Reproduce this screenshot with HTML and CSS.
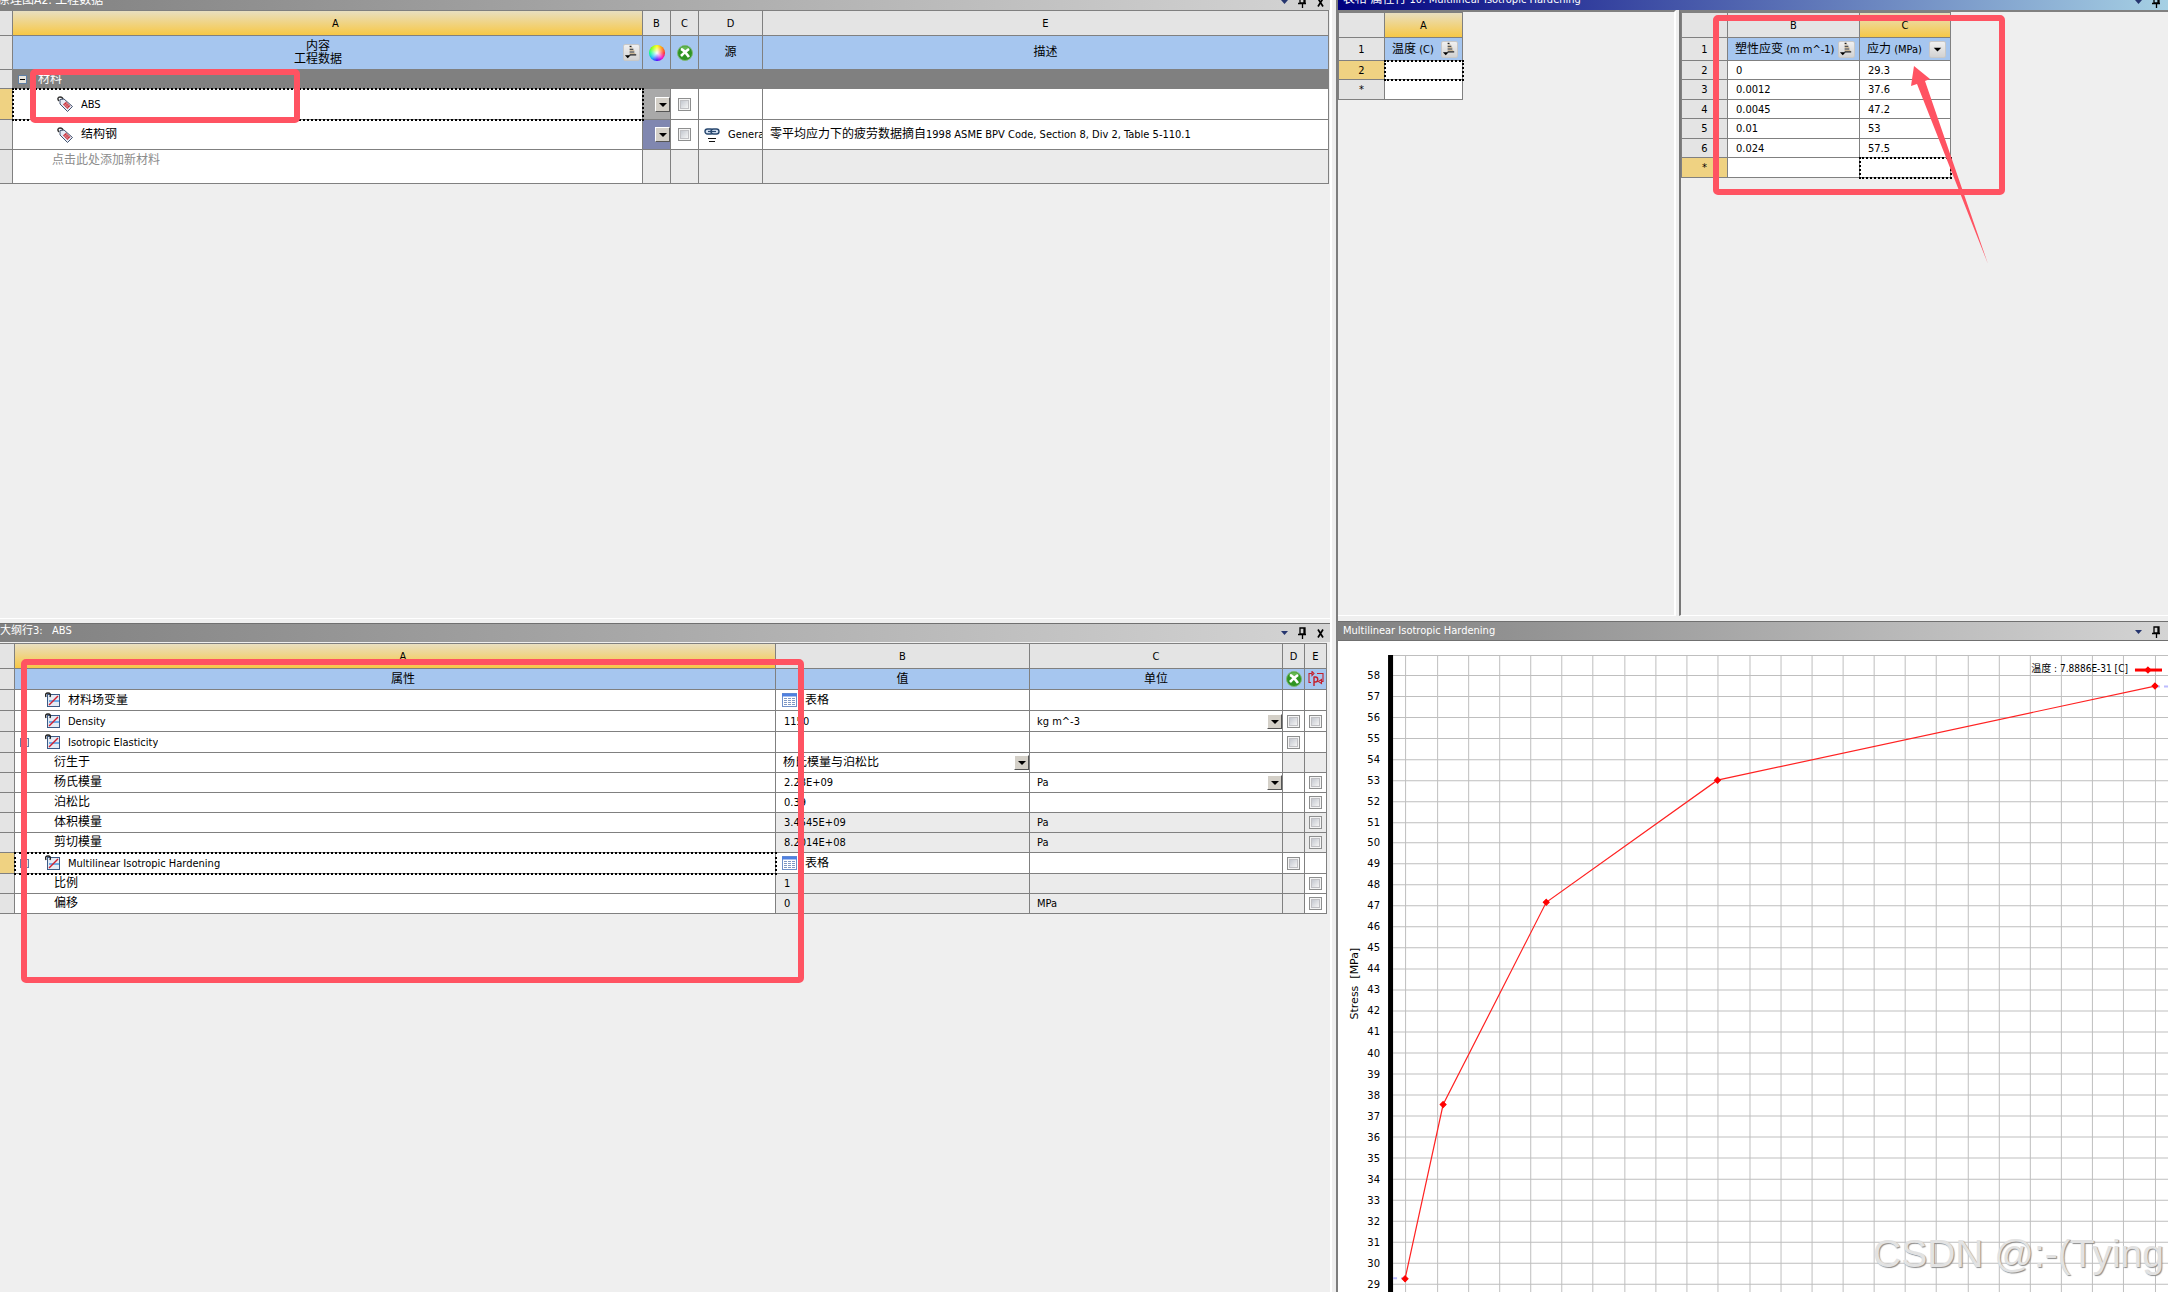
FILE: index.html
```html
<!DOCTYPE html>
<html lang="zh-CN">
<head>
<meta charset="utf-8">
<title>工程数据</title>
<link rel="stylesheet" href="styles.css">
</head>
<body>
<svg class="defs" width="0" height="0" aria-hidden="true">
  <symbol id="i-tag" viewBox="0 0 16 16">
    <path d="M2 5C0 3 1 1 3 1s3 1 3 3" fill="none" stroke="#333" stroke-width="1.4"/>
    <path d="M3 3.500l4-.5 8.500 7.500-5 5L3 8z" fill="#e6ecf6" stroke="#43536f"/>
    <path d="M6 8.500l3-3 4.500 4.500-3 3z" fill="#c8323c"/>
    <path d="M7 7.500l4.500 4.500M8.500 6l4.500 4.500M7.500 10l3-3M9 11.500l3-3" stroke="#eab4b8" stroke-width=".6"/>
  </symbol>
  <symbol id="i-prop" viewBox="0 0 16 16">
    <rect x="2.500" y="2.500" width="12" height="12" fill="#e4ebf5" stroke="#3c5a86"/>
    <path d="M1 5C0 2 1 1 3 1s3 1 2 4" fill="none" stroke="#222" stroke-width="1.4"/>
    <path d="M4 9h10" stroke="#2f8ae0" stroke-width="1.300"/>
    <path d="M4 13l9-9" stroke="#d02030" stroke-width="1.400"/>
  </symbol>
  <symbol id="i-x" viewBox="0 0 16 16">
    <circle cx="8" cy="8" r="7.500" fill="#2f9422" stroke="#7fb777"/>
    <path d="M3 4a6 6 0 0 1 10 0l-3 2H5z" fill="#7cc866" opacity=".7"/>
    <path d="M4 4c3 1 5 4 8 8M12 4c-3 2-5 4-8 7" stroke="#fff" stroke-width="2.600" fill="none"/>
  </symbol>
  <symbol id="i-param" viewBox="0 0 16 16">
    <path d="M4 2.500H1v9h2M4 .5v4l2-2zM9 2.500h6v8h-2M13.500 8.500l-3 2 3 2z" fill="none" stroke="#c4202c" stroke-width="1.100"/>
    <path d="M6 15V5.500M6 6h1.500c3 0 3 5 0 5H6" fill="none" stroke="#c4202c" stroke-width="1.400"/>
  </symbol>
  <symbol id="i-table" viewBox="0 0 16 16">
    <rect x=".5" y="1.500" width="14" height="13" fill="#fff" stroke="#7090c8"/>
    <path d="M0 3h15" stroke="#4f80e0" stroke-width="3"/>
    <path d="M2 6.500h11M2 8.500h11M2 10.500h11M2 12.500h11" stroke="#7f98c4" stroke-dasharray="3 1"/>
  </symbol>
  <symbol id="i-link" viewBox="0 0 16 16">
    <rect x="1" y="2" width="8" height="5" rx="2.500" fill="#d5e2f3" stroke="#28486f" stroke-width="1.400"/>
    <rect x="7" y="2" width="8" height="5" rx="2.500" fill="#d5e2f3" stroke="#28486f" stroke-width="1.400"/>
    <path d="M4 4.500h8" stroke="#28486f" stroke-width="1.200"/>
    <path d="M4 11.500h8M5 14.500h6" stroke="#111"/>
  </symbol>
  <symbol id="i-sort" viewBox="0 0 16 16">
    <path d="M6 1.500h2M6 4.500h4M6 7.500h5M6 10.500h7" stroke="#222" stroke-width="1.200"/>
    <path d="M6 9h6M6 6h5M6 3h3" stroke="#c9b08a"/>
    <path d="M1 11h6l-3 3z" fill="#000"/>
  </symbol>
  <symbol id="i-down" viewBox="0 0 16 16"><path d="M4 6h8l-4 4z" fill="#000"/></symbol>
  <symbol id="i-menu" viewBox="0 0 16 16"><path d="M5 6h7L8.500 10z" fill="#26356f"/></symbol>
  <symbol id="i-pin" viewBox="0 0 16 16"><path d="M6 3h5v6H6zM10 3v6M4 9.500h8M8.500 9v5" fill="none" stroke="#000" stroke-width="1.300"/></symbol>
  <symbol id="i-close" viewBox="0 0 16 16"><path d="M6 4.500l5 8M11 4.500l-5 8" stroke="#000" stroke-width="1.700"/></symbol>
</svg>

<main class="workspace">
  <div class="side left">
    <section class="pane">
      <header class="bar cut">
        <h2>原理图A2: 工程数据</h2>
        <div class="tools">
          <button aria-label="菜单"><svg><use href="#i-menu"/></svg></button>
          <button aria-label="固定"><svg><use href="#i-pin"/></svg></button>
          <button aria-label="关闭"><svg><use href="#i-close"/></svg></button>
        </div>
      </header>
      <table class="grid outline">
        <colgroup><col class="w-edge"><col class="w-name"><col class="w-flag"><col class="w-flag"><col class="w-src"><col></colgroup>
        <tr class="h25 letters"><th></th><th class="gold wide">A</th><th>B</th><th>C</th><th>D</th><th>E</th></tr>
        <tr class="h34 heads"><th class="edge"></th>
          <th><div class="headcell"><span>内容<br>工程数据</span><button class="filter" aria-label="排序"><svg><use href="#i-sort"/></svg></button></div></th>
          <th><i class="wheel"></i></th><th><svg class="ico"><use href="#i-x"/></svg></th><th>源</th><th>描述</th></tr>
        <tr class="h19 group"><th class="edge"></th><td colspan="5"><div class="line"><button class="fold" aria-label="折叠"></button><span>材料</span></div></td></tr>
        <tr class="h31"><th class="edge on"></th>
          <td class="picked"><div class="line item"><svg class="ico"><use href="#i-tag"/></svg><span>ABS</span></div></td>
          <td class="swatch grey"><div class="drop"><select aria-label="ABS 颜色"><option></option></select><i></i></div></td>
          <td class="mid"><input type="checkbox" aria-label="抑制 ABS"></td><td></td><td></td></tr>
        <tr class="h30"><th class="edge"></th>
          <td><div class="line item"><svg class="ico"><use href="#i-tag"/></svg><span class="zh">结构钢</span></div></td>
          <td class="swatch violet"><div class="drop"><select aria-label="结构钢 颜色"><option></option></select><i></i></div></td>
          <td class="mid"><input type="checkbox" aria-label="抑制 结构钢"></td>
          <td><div class="line src"><svg class="ico"><use href="#i-link"/></svg><span>Genera</span></div></td>
          <td class="note"><span class="zh">零平均应力下的疲劳数据摘自</span>1998 ASME BPV Code, Section 8, Div 2, Table 5-110.1</td></tr>
        <tr class="h34"><th class="edge"></th><td class="hint">点击此处添加新材料</td><td class="ro"></td><td class="ro"></td><td class="ro"></td><td class="ro"></td></tr>
      </table>
      <div class="callout c-abs"></div>
    </section>

    <section class="pane lower">
      <header class="bar full">
        <h2>大纲行3:&nbsp; &nbsp;ABS</h2>
        <div class="tools">
          <button aria-label="菜单"><svg><use href="#i-menu"/></svg></button>
          <button aria-label="固定"><svg><use href="#i-pin"/></svg></button>
          <button aria-label="关闭"><svg><use href="#i-close"/></svg></button>
        </div>
      </header>
      <table class="grid props">
        <colgroup><col class="w-edge2"><col><col class="w-val"><col class="w-unit"><col class="w-tick"><col class="w-tick"></colgroup>
        <tr class="h25 letters"><th></th><th class="gold wide">A</th><th>B</th><th>C</th><th>D</th><th>E</th></tr>
        <tr class="h21 heads"><th class="edge"></th><th class="wide">属性</th><th>值</th><th>单位</th><th><svg class="ico"><use href="#i-x"/></svg></th><th><svg class="ico"><use href="#i-param"/></svg></th></tr>
        <tr class="h21"><th class="edge"></th><td><div class="line prop"><svg class="ico"><use href="#i-prop"/></svg><span class="zh">材料场变量</span></div></td><td><div class="line tab"><svg class="ico"><use href="#i-table"/></svg><span class="zh">表格</span></div></td><td></td><td></td><td></td></tr>
        <tr class="h21"><th class="edge"></th><td><div class="line prop"><svg class="ico"><use href="#i-prop"/></svg><span>Density</span></div></td><td class="val">1150</td><td><div class="drop"><select aria-label="密度单位"><option>kg m^-3</option></select><i></i></div></td><td class="mid"><input type="checkbox" aria-label="抑制 Density"></td><td class="mid"><input type="checkbox" aria-label="参数化 Density"></td></tr>
        <tr class="h21"><th class="edge"></th><td><div class="line prop fold-row"><button class="fold" aria-label="折叠"></button><svg class="ico"><use href="#i-prop"/></svg><span>Isotropic Elasticity</span></div></td><td></td><td></td><td class="mid"><input type="checkbox" aria-label="抑制 Isotropic Elasticity"></td><td></td></tr>
        <tr class="h20"><th class="edge"></th><td class="sub">衍生于</td><td><div class="drop zh"><select aria-label="衍生于"><option>杨氏模量与泊松比</option></select><i></i></div></td><td></td><td class="ro"></td><td class="ro"></td></tr>
        <tr class="h20"><th class="edge"></th><td class="sub">杨氏模量</td><td class="val">2.28E+09</td><td><div class="drop"><select aria-label="杨氏模量单位"><option>Pa</option></select><i></i></div></td><td></td><td class="mid"><input type="checkbox" aria-label="参数化 杨氏模量"></td></tr>
        <tr class="h20"><th class="edge"></th><td class="sub">泊松比</td><td class="val">0.39</td><td></td><td></td><td class="mid"><input type="checkbox" aria-label="参数化 泊松比"></td></tr>
        <tr class="h20"><th class="edge"></th><td class="sub">体积模量</td><td class="val ro">3.4545E+09</td><td class="unit ro">Pa</td><td class="ro"></td><td class="mid ro"><input type="checkbox" aria-label="参数化 体积模量"></td></tr>
        <tr class="h20"><th class="edge"></th><td class="sub">剪切模量</td><td class="val ro">8.2014E+08</td><td class="unit ro">Pa</td><td class="ro"></td><td class="mid ro"><input type="checkbox" aria-label="参数化 剪切模量"></td></tr>
        <tr class="h21"><th class="edge on"></th><td class="picked"><div class="line prop fold-row"><button class="fold" aria-label="折叠"></button><svg class="ico"><use href="#i-prop"/></svg><span>Multilinear Isotropic Hardening</span></div></td><td><div class="line tab"><svg class="ico"><use href="#i-table"/></svg><span class="zh">表格</span></div></td><td></td><td class="mid"><input type="checkbox" aria-label="抑制 Multilinear Isotropic Hardening"></td><td></td></tr>
        <tr class="h20"><th class="edge"></th><td class="sub">比例</td><td class="val ro">1</td><td class="ro"></td><td class="ro"></td><td class="mid"><input type="checkbox" aria-label="参数化 比例"></td></tr>
        <tr class="h20"><th class="edge"></th><td class="sub">偏移</td><td class="val ro">0</td><td class="unit ro">MPa</td><td class="ro"></td><td class="mid"><input type="checkbox" aria-label="参数化 偏移"></td></tr>
      </table>
      <div class="callout c-props"></div>
    </section>
  </div>

  <div class="side right">
    <section class="pane">
      <header class="bar cut active">
        <h2><span class="zh">表格 属性行</span> 10: Multilinear Isotropic Hardening</h2>
        <div class="tools">
          <button aria-label="菜单"><svg><use href="#i-menu"/></svg></button>
          <button aria-label="固定"><svg><use href="#i-pin"/></svg></button>
        </div>
      </header>
      <div class="split">
        <div class="well first">
          <table class="grid data t1">
            <colgroup><col class="w-num"><col></colgroup>
            <tr class="h25 letters"><th></th><th class="gold">A</th></tr>
            <tr class="h23 heads"><th class="edge">1</th><th><div class="colhead"><span><span class="zh">温度</span> (C)</span><button class="filter" aria-label="排序"><svg><use href="#i-sort"/></svg></button></div></th></tr>
            <tr class="h19"><th class="edge on">2</th><td class="picked"></td></tr>
            <tr class="h20"><th class="edge">*</th><td></td></tr>
          </table>
        </div>
        <div class="well">
          <table class="grid data t2">
            <colgroup><col class="w-num"><col class="w-strain"><col></colgroup>
            <tr class="h25 letters"><th></th><th>B</th><th class="gold">C</th></tr>
            <tr class="h23 heads"><th class="edge">1</th><th><div class="colhead"><span><span class="zh">塑性应变</span> (m m^-1)</span><button class="filter" aria-label="排序"><svg><use href="#i-sort"/></svg></button></div></th><th><div class="colhead"><span><span class="zh">应力</span> (MPa)</span><button class="filter" aria-label="筛选"><svg><use href="#i-down"/></svg></button></div></th></tr>
            <tr class="h19"><th class="edge">2</th><td>0</td><td>29.3</td></tr>
            <tr class="h20"><th class="edge">3</th><td>0.0012</td><td>37.6</td></tr>
            <tr class="h19"><th class="edge">4</th><td>0.0045</td><td>47.2</td></tr>
            <tr class="h20"><th class="edge">5</th><td>0.01</td><td>53</td></tr>
            <tr class="h19"><th class="edge">6</th><td>0.024</td><td>57.5</td></tr>
            <tr class="h20"><th class="edge on">*</th><td></td><td class="picked"></td></tr>
          </table>
          <div class="callout c-data"></div>
          <svg class="arrow" viewBox="0 0 80 200" aria-hidden="true"><path d="M4 1L20 14L15 16L78 199L7 19L1 21z" fill="#ff5362"/></svg>
        </div>
      </div>
    </section>

    <section class="pane chart">
      <header class="bar full two">
        <h2><span class="zh">属性图表行</span><br>Multilinear Isotropic Hardening</h2>
        <div class="tools">
          <button aria-label="菜单"><svg><use href="#i-menu"/></svg></button>
          <button aria-label="固定"><svg><use href="#i-pin"/></svg></button>
        </div>
      </header>
      <div class="plot">
        <svg viewBox="0 0 829 651" preserveAspectRatio="xMinYMin slice" role="img" aria-label="Multilinear Isotropic Hardening">
          <g transform="translate(-1 0)">
          <path class="rule" d="M56 14.500H840M56 34.500H840M56 55.500H840M56 76.500H840M56 97.500H840M56 118.500H840M56 139.500H840M56 160.500H840M56 181.500H840M56 201.500H840M56 222.500H840M56 243.500H840M56 264.500H840M56 285.500H840M56 306.500H840M56 327.500H840M56 348.500H840M56 369.500H840M56 390.500H840M56 411.500H840M56 432.500H840M56 453.500H840M56 474.500H840M56 495.500H840M56 516.500H840M56 537.500H840M56 558.500H840M56 579.500H840M56 600.500H840M56 621.500H840M56 642.500H840"/>
          <path class="rule" d="M68.500 14V651M100.500 14V651M131.500 14V651M162.500 14V651M193.500 14V651M224.500 14V651M255.500 14V651M287.500 14V651M318.500 14V651M349.500 14V651M380.500 14V651M412.500 14V651M443.500 14V651M474.500 14V651M505.500 14V651M536.500 14V651M567.500 14V651M598.500 14V651M630.500 14V651M661.500 14V651M692.500 14V651M723.500 14V651M754.500 14V651M785.500 14V651M817.500 14V651"/>
          <rect x="51" y="14" width="5" height="637"/>
          <g class="ticks">
            <text x="43" y="38">58</text><text x="43" y="59">57</text><text x="43" y="80">56</text><text x="43" y="101">55</text><text x="43" y="122">54</text><text x="43" y="143">53</text><text x="43" y="164">52</text><text x="43" y="185">51</text><text x="43" y="205">50</text><text x="43" y="226">49</text><text x="43" y="247">48</text><text x="43" y="268">47</text><text x="43" y="289">46</text><text x="43" y="310">45</text><text x="43" y="331">44</text><text x="43" y="352">43</text><text x="43" y="373">42</text><text x="43" y="394">41</text><text x="43" y="415">40</text><text x="43" y="436">39</text><text x="43" y="457">38</text><text x="43" y="478">37</text><text x="43" y="499">36</text><text x="43" y="520">35</text><text x="43" y="541">34</text><text x="43" y="562">33</text><text x="43" y="583">32</text><text x="43" y="604">31</text><text x="43" y="625">30</text><text x="43" y="646">29</text>
          </g>
          <text class="axis" transform="translate(21 378) rotate(-90)">Stress&#160; [MPa]</text>
          <path d="M56 636.500H68M818 45.500H832" stroke="#bcbcff" stroke-width="2" stroke-dasharray="4 4"/>
          <polyline points="68,637 106,463 209,261 380,139 817,45" fill="none" stroke="#f22" stroke-width="1.200"/>
          <path d="M797 29h27" stroke="#f00" stroke-width="3"/>
          <path fill="#f00" d="M68 634l3 3-3 3-3-3zM106 460l3 3-3 3-3-3zM209 258l3 3-3 3-3-3zM380 136l3 3-3 3-3-3zM817 42l3 3-3 3-3-3zM810 26l3 3-3 3-3-3z" stroke="#f00"/>
          <text class="legend" x="790" y="31">温度 : 7.8886E-31 [C]</text>
          </g>
        </svg>
        <p class="mark">CSDN @:-(Tying</p>
      </div>
    </section>
  </div>
</main>
</body>
</html>
```

FILE: styles.css
```css
* { box-sizing: border-box; }
html, body { height: 100%; margin: 0; }
body {
  background: #efefef;
  color: #000;
  font: 11px/13px "DejaVu Sans Condensed", "Noto Sans CJK SC", sans-serif;
  overflow: hidden;
}
.defs { position: absolute; }
.zh, .sub, .hint, .heads th { font-size: 12px; }
button, select, input { font: inherit; color: inherit; margin: 0; padding: 0; }
svg { display: block; }

.workspace {
  display: grid;
  grid-template-columns: 1336fr 832fr;
  height: 100vh;
}
.side { display: grid; grid-template-rows: 618fr 674fr; min-width: 0; min-height: 0; }
.left { border-right: 2px solid #fff; margin-right: 4px; }
.right { border-left: 2px solid #7d7d7d; grid-template-rows: 621fr 671fr; }
.pane { position: relative; min-width: 0; min-height: 0; }
.lower { border-top: 1px solid #fff; padding-top: 4px; }

/* title bars */
.bar {
  display: flex;
  justify-content: space-between;
  overflow: hidden;
  color: #fff;
  background: linear-gradient(90deg, #808080, #d4d4d4);
}
.bar h2 { margin: 0; font-size: 11px; font-weight: 400; line-height: 14px; white-space: nowrap; }
.bar.cut { height: 10px; align-items: flex-end; }
.bar.cut h2 { padding-bottom: 4px; line-height: 12px; }
.bar.cut .tools { height: 16px; align-items: flex-end; }
.left .bar.cut h2 { font-size: 12px; margin-left: -2px; }
.bar.active { background: linear-gradient(90deg, #00007f, #a6d0e4); }
.right .bar h2 { padding-left: 5px; }
.bar.full { height: 19px; border-top: 1px solid #707070; align-items: center; }
.bar.two { height: 20px; border-bottom: 1px solid #707070; align-items: flex-end; }
.bar.two h2 { line-height: 13px; padding-bottom: 3px; }
.lower .bar.full { margin-bottom: 1px; }
.lower .bar.full h2 { padding-bottom: 4px; }
.tools { display: flex; gap: 2px; flex: none; align-items: center; padding-right: 2px; }
.tools button { border: 0; background: none; width: 16px; height: 16px; }
.tools svg { width: 16px; height: 16px; }
.right .tools { padding-right: 4px; }

/* grids */
.grid { width: 100%; table-layout: fixed; border-collapse: separate; border-spacing: 0; border-top: 1px solid #808080; }
.left .grid { width: calc(100% - 1px); }
.left .grid.props { width: calc(100% - 3px); }
.grid th, .grid td {
  padding: 0;
  font-weight: 400;
  white-space: nowrap;
  overflow: hidden;
  border-right: 1px solid #808080;
  border-bottom: 1px solid #808080;
}
.grid td { background: #fff; text-align: left; }
.grid th.wide { padding-left: 16px; }
.h19 { height: 19px; }
.h20 { height: 20px; }
.h21 { height: 21px; }
.h23 { height: 23px; }
.h25 { height: 25px; }
.h30 { height: 30px; }
.h31 { height: 31px; }
.h34 { height: 34px; }
.letters th { background: #e4e4e4; }
.letters .gold { background: linear-gradient(#e9dfc0, #f7c846); }
.heads th { background: #a6c6ef; }
.grid .edge { background: #e4e4e4; font-size: 11px; }
.grid .on { background: #efd282; }
.grid td.ro { background: #ebebeb; }
.grid td.picked { outline: 2px dotted #000; outline-offset: -1px; }
.grid .group td { background: #808080; color: #fff; }
.grid .mid { text-align: center; }

.w-edge { width: 13px; }
.w-name { width: 630px; }
.w-flag { width: 28px; }
.w-src { width: 64px; }
.w-edge2 { width: 15px; }
.w-val { width: 254px; }
.w-unit { width: 253px; }
.w-tick { width: 22px; }
.w-num { width: 46px; }
.w-strain { width: 132px; }

.line { display: flex; align-items: center; gap: 8px; }
.line span { overflow: hidden; }
.ico { width: 16px; height: 16px; flex: none; }
.heads .ico, .wheel { margin: 0 auto; }
.group .line { padding-left: 5px; gap: 11px; font-size: 12px; line-height: 17px; }
.item { padding-left: 44px; }
.src { padding-left: 5px; }
.note { text-indent: 7px; }
.hint { color: #8c8c8c; padding: 2px 0 0 39px !important; vertical-align: top; line-height: 16px; }
.prop { padding-left: 30px; gap: 7px; }
.fold-row { padding-left: 5px; }
.fold-row .fold { margin-right: 9px; }
.tab { padding-left: 6px; gap: 7px; }
.sub { padding-left: 39px !important; }
.val { padding-left: 8px !important; }
.unit { padding-left: 7px !important; }

.fold {
  width: 9px; height: 9px; flex: none;
  border: 1px solid #5f7fa5;
  background: linear-gradient(#000, #000) center / 5px 1px no-repeat, #e8e4dc;
}
.wheel {
  display: block; width: 16px; height: 16px; border-radius: 50%;
  background: radial-gradient(#fff, #fff0 70%), conic-gradient(#ff0, #f80, #f22, #e0c, #40f, #0af, #0f8, #8f0, #ff0);
}

.headcell { display: flex; align-items: center; line-height: 13px; padding-right: 2px; }
.headcell span { flex: 1; }
.colhead { display: flex; align-items: center; justify-content: space-between; padding: 0 4px 0 7px; font-size: 11px; }
.filter {
  width: 17px; height: 17px; flex: none;
  border: 1px solid #c8c8c8; border-radius: 2px;
  background: linear-gradient(#f0f0f0, #d2d2d2);
}
.filter svg { width: 15px; height: 15px; }

.drop { position: relative; height: 17px; }
.drop select { appearance: none; width: 100%; height: 17px; border: 0; border-radius: 0; background: none; padding: 0 20px 0 7px; display: block; }
.drop i {
  position: absolute; right: 0; top: 1px; width: 15px; height: 15px;
  border: 1px solid; border-color: #fff #555 #555 #fff;
  background: #d4d0c8; pointer-events: none;
}
.drop i::after {
  content: ""; position: absolute; left: 3px; top: 5px;
  border: 4px solid transparent; border-top-color: #000; border-bottom: 0;
}
.grid .grey { background: #a9a9a9; }
.grid .violet { background: #8087b0; }

input[type="checkbox"] {
  appearance: none; display: block; width: 13px; height: 13px; margin: 0 auto;
  border: 1px solid #8e8f8f;
  background: linear-gradient(135deg, #c4c8d0, #f4f4f4) center / 7px 7px no-repeat, #f4f4f4;
  box-shadow: inset 0 0 0 1px #f4f4f4, inset 0 0 0 2px #c0c0c4;
}

/* data tables */
.split { display: grid; grid-template-columns: 338fr 489fr; gap: 3px; height: calc(100% - 15px); }
.well { position: relative; border-top: 2px solid #808080; border-bottom: 1px solid #fff; }
.well + .well { border-left: 2px solid #777; }
.first { border-right: 2px solid #fff; }
.grid.data { border-left: 1px solid #808080; }
.data td { padding-left: 8px; }
.t1 { width: 125px; }
.t2 { width: 270px; }

/* chart */
.chart { display: flex; flex-direction: column; overflow: hidden; }
.chart .bar { flex: none; }
.plot { position: relative; flex: 1; min-height: 0; background: #fff; overflow: hidden; }
.plot svg { width: 100%; height: 100%; }
.rule { stroke: #bfbfbf; fill: none; }
.ticks { font: 10px "DejaVu Sans", sans-serif; text-anchor: end; }
.legend { font: 10px "DejaVu Sans Condensed", "Noto Sans CJK SC", sans-serif; text-anchor: end; }
.axis { font: 11px "DejaVu Sans", sans-serif; }
.mark {
  position: absolute; right: 4px; bottom: 14px; margin: 0;
  font: 39px/48px "Liberation Sans", sans-serif;
  color: #e2e2e2; text-shadow: 1px 1px 1px #8c8c8c;
}

/* review marks */
.callout { position: absolute; border: 6px solid #ff5362; border-radius: 5px; pointer-events: none; }
.c-abs { left: 30px; top: 69px; width: 270px; height: 54px; }
.c-props { left: 21px; top: 40px; width: 783px; height: 324px; }
.c-data { left: 32px; top: 3px; width: 292px; height: 180px; }
.arrow { position: absolute; left: 229px; top: 53px; width: 80px; height: 200px; pointer-events: none; }
```
